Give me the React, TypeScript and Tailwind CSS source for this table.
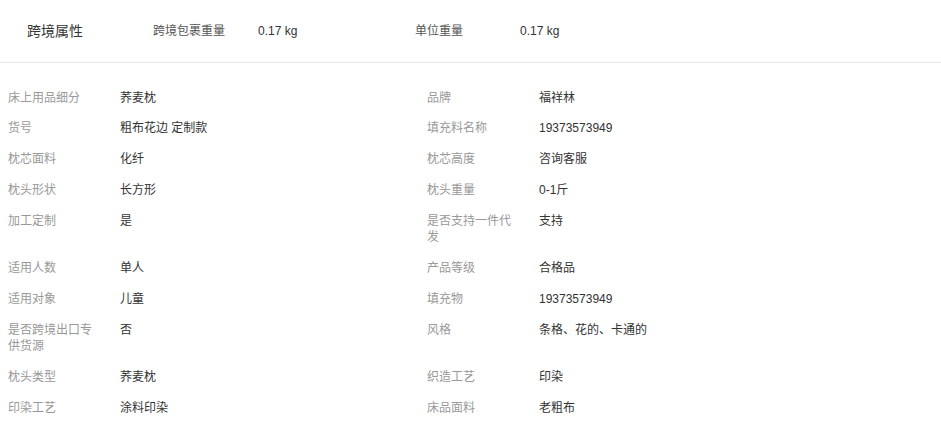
import React from "react";

const rows: [string, string, string, string][] = [
  ["床上用品细分", "荞麦枕", "品牌", "福祥林"],
  ["货号", "粗布花边 定制款", "填充料名称", "19373573949"],
  ["枕芯面料", "化纤", "枕芯高度", "咨询客服"],
  ["枕头形状", "长方形", "枕头重量", "0-1斤"],
  ["加工定制", "是", "是否支持一件代发", "支持"],
  ["适用人数", "单人", "产品等级", "合格品"],
  ["适用对象", "儿童", "填充物", "19373573949"],
  ["是否跨境出口专供货源", "否", "风格", "条格、花的、卡通的"],
  ["枕头类型", "荞麦枕", "织造工艺", "印染"],
  ["印染工艺", "涂料印染", "床品面料", "老粗布"],
];

function Pair({ label, value }: { label: string; value: string }) {
  return (
    <div className="flex">
      <div className="w-[112px] shrink-0">
        <div className="w-[90px] text-[#999]">{label}</div>
      </div>
      <div className="text-[#333]">{value}</div>
    </div>
  );
}

export default function App() {
  return (
    <div
      className="w-[941px] h-[425px] bg-white overflow-hidden text-[12px] leading-[16.5px]"
      style={{ fontFamily: '"Liberation Sans", "Noto Sans CJK SC", sans-serif' }}
    >
      <div className="h-[63px] flex items-center border-b border-[#e8e8e8]">
        <div className="w-[153px] pl-[27px] text-[14px] text-[#333] pt-px">跨境属性</div>
        <div className="w-[105px] text-[#555]">跨境包裹重量</div>
        <div className="w-[157px] text-[#333]">0.17 kg</div>
        <div className="w-[105px] text-[#555]">单位重量</div>
        <div className="text-[#333]">0.17 kg</div>
      </div>
      <div className="grid grid-cols-[419px_1fr] gap-y-[14.3px] pl-2 pt-[26.5px]">
        {rows.map((r, i) => (
          <React.Fragment key={i}>
            <Pair label={r[0]} value={r[1]} />
            <Pair label={r[2]} value={r[3]} />
          </React.Fragment>
        ))}
      </div>
    </div>
  );
}
